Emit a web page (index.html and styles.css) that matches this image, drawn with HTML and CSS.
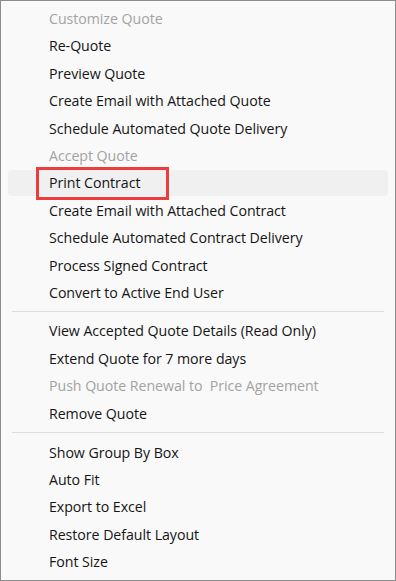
FILE: index.html
```html
<!DOCTYPE html>
<html>
<head>
<meta charset="utf-8">
<link rel="stylesheet" href="styles.css">
</head>
<body>
<div class="menu">
  <div class="item disabled">Customize Quote</div>
  <div class="item">Re-Quote</div>
  <div class="item">Preview Quote</div>
  <div class="item">Create Email with Attached Quote</div>
  <div class="item">Schedule Automated Quote Delivery</div>
  <div class="item disabled">Accept Quote</div>
  <div class="item hover marked">Print Contract</div>
  <div class="item">Create Email with Attached Contract</div>
  <div class="item">Schedule Automated Contract Delivery</div>
  <div class="item">Process Signed Contract</div>
  <div class="item">Convert to Active End User</div>
  <div class="sep"></div>
  <div class="item">View Accepted Quote Details (Read Only)</div>
  <div class="item">Extend Quote for 7 more days</div>
  <div class="item disabled">Push Quote Renewal to&nbsp; Price Agreement</div>
  <div class="item">Remove Quote</div>
  <div class="sep sep2"></div>
  <div class="item">Show Group By Box</div>
  <div class="item">Auto Fit</div>
  <div class="item">Export to Excel</div>
  <div class="item">Restore Default Layout</div>
  <div class="item">Font Size</div>
</div>
</body>
</html>
```
FILE: styles.css
```css
html, body {
  margin: 0;
  padding: 0;
  background: #f9f9f9;
}
.menu {
  box-sizing: border-box;
  width: 396px;
  height: 581px;
  border: 1px solid #8c8c8c;
  background: #f9f9f9;
  padding: 3.6px 0 0 0;
  display: flex;
  flex-direction: column;
  font-family: "Open Sans", "Noto Sans", sans-serif;
  font-size: 14.2px;
  color: #151515;
}
.item {
  height: 27.45px;
  display: flex;
  align-items: center;
  margin: 0 7px;
  padding-left: 41px;
  border-radius: 4px;
  white-space: nowrap;
  letter-spacing: -0.05px;
}
.item.disabled {
  color: #a3a3a3;
}
.item.hover {
  background: #f0f0f0;
  height: 26px;
  margin-top: 0.7px;
  margin-bottom: 0.75px;
}
.item.marked {
  position: relative;
}
.item.marked::after {
  content: "";
  position: absolute;
  left: 28px;
  top: -3px;
  width: 127px;
  height: 27px;
  border: 3px solid #ee3b3b;
}
.sep {
  height: 10.6px;
  display: flex;
  align-items: center;
  margin: 0 11px;
}
.sep::before {
  content: "";
  flex: 1;
  height: 1px;
  background: #dedede;
}
.sep2 {
  height: 11.6px;
}
```
